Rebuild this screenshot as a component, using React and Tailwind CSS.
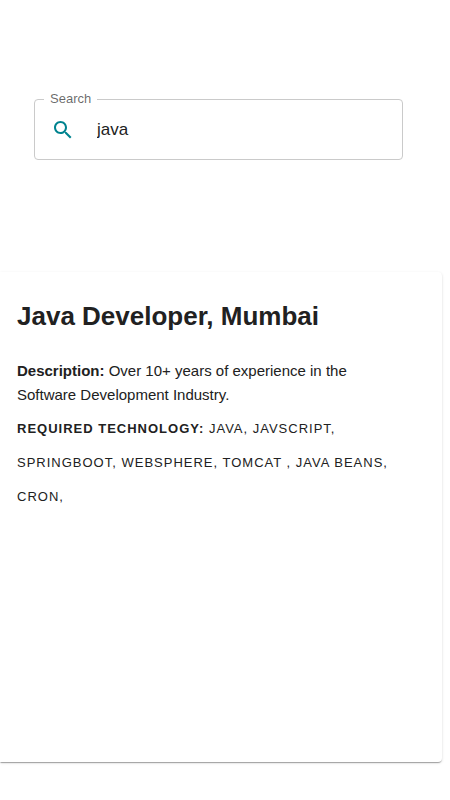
export default function App() {
  return (
    <main className="flex min-h-screen flex-col bg-white pt-[92px] font-['Liberation_Sans',Arial,sans-serif] text-[#212121]">
      <fieldset className="mr-[47px] ml-[34px] h-[68px] rounded border border-[#cacaca] px-[9px] text-black/60">
        <legend className="px-1.5 text-[13px] leading-[14px]">
          <label htmlFor="search">Search</label>
        </legend>
        <div className="flex h-12 items-center gap-[22px] pl-[7px]">
          <svg className="size-6 shrink-0 fill-[#00838f]" viewBox="0 0 24 24" aria-hidden="true">
            <path d="M15.5 14h-.79l-.28-.27C15.41 12.59 16 11.11 16 9.5 16 5.91 13.09 3 9.5 3S3 5.91 3 9.5 5.91 16 9.5 16c1.61 0 3.09-.59 4.23-1.57l.27.28v.79l5 4.99L20.49 19l-4.99-5zm-6 0C7.01 14 5 11.99 5 9.5S7.01 5 9.5 5 14 7.01 14 9.5 11.99 14 9.5 14z" />
          </svg>
          <input id="search" type="text" defaultValue="java" className="w-full min-w-0 bg-transparent text-[17px] leading-6 text-[#212121] outline-none" />
        </div>
      </fieldset>
      <article className="mt-28 mr-2 mb-[38px] min-h-[490px] flex-1 rounded-r bg-white px-[17px] pt-7 shadow-[0_2px_1px_-1px_rgba(0,0,0,0.2),0_1px_1px_rgba(0,0,0,0.14),0_1px_3px_rgba(0,0,0,0.12)]">
        <h1 className="text-[26px] leading-8 font-bold">Java Developer, Mumbai</h1>
        <p className="mt-[27px] pr-8 text-[15px] leading-6">
          <strong>Description:</strong> Over 10+ years of experience in the Software Development Industry.
        </p>
        <p className="mt-[5px] text-[13px] leading-[34px] tracking-[1px] uppercase">
          <strong>Required Technology:</strong> Java, Javscript, Springboot, Websphere, Tomcat , Java Beans, Cron,
        </p>
      </article>
    </main>
  );
}
